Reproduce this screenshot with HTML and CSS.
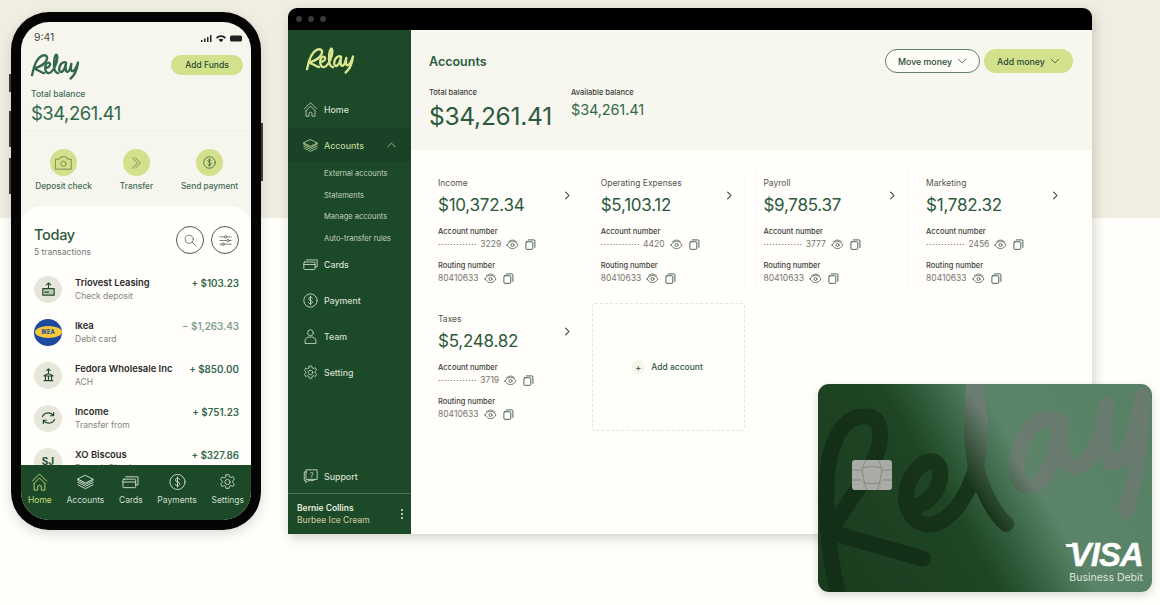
FILE: index.html
```html
<!DOCTYPE html>
<html lang="en">
<head>
<meta charset="utf-8">
<title>Relay</title>
<link rel="stylesheet" href="styles.css">
</head>
<body>
<svg class="defs" width="0" height="0" aria-hidden="true">
  <symbol id="i-eye" viewBox="0 0 14 12"><path d="M1 6.500C3 3.500 5 2.500 7 2.500s4 1 6 4c-2 3-4 4-6 4s-4-1-6-4z"/><path d="M2.500 3.200C4 1.800 5.500 1.200 7 1.200s3 .6 4.500 2"/><circle cx="7" cy="6.500" r="1.700"/></symbol>
  <symbol id="i-copy" viewBox="0 0 12 12"><rect x="1" y="3" width="7.500" height="8.300" rx="1"/><path d="M3.500 1h6.300a1 1 0 0 1 1 1v7.200"/></symbol>
  <symbol id="i-chev" viewBox="0 0 8 12"><path d="M1.500 1.500 6 6l-4.500 4.500"/></symbol>
  <symbol id="i-down" viewBox="0 0 12 8"><path d="M1 1.500 6 6.500l5-5"/></symbol>
  <symbol id="i-home" viewBox="0 0 18 20"><path d="M1 9 9 1l8 8"/><path d="M3 11.500 9 5.500l6 6"/><path d="M3 11.500V19h4v-3.500a2 2 0 0 1 4 0V19h4v-7.500"/></symbol>
  <symbol id="i-layers" viewBox="0 0 18 16"><path d="M9 1 17 5 9 9 1 5z"/><path d="M1 5v1.500l8 4 8-4V5"/><path d="M1 8.500l8 4 8-4"/><path d="M1 11l8 4 8-4"/></symbol>
  <symbol id="i-cards" viewBox="0 0 18 14"><rect x="1" y="4" width="13.500" height="9" rx="1"/><path d="M1 7h13.500"/><path d="M4 1.500h13v8.500h-2.500"/></symbol>
  <symbol id="i-dollar" viewBox="0 0 18 18"><circle cx="9" cy="9" r="8"/><path d="M11.200 6.300C10.800 5.500 10 5 9 5c-1.300 0-2.200.7-2.200 1.900 0 2.500 4.500 1.400 4.500 4 0 1.200-1 2-2.300 2-1.100 0-2-.5-2.400-1.400M9 3.800v10.400"/></symbol>
  <symbol id="i-person" viewBox="0 0 16 18"><circle cx="8" cy="4.500" r="3.500"/><path d="M1.500 17v-2.500c0-3 2-5 6.500-5s6.500 2 6.500 5V17z"/></symbol>
  <symbol id="i-gear" viewBox="0 0 20 20"><circle cx="10" cy="10" r="3"/><path d="M8.200 1.500h3.600l.5 2.500 1.700.8 2.300-1.200 1.800 3.100-1.900 1.600v2.400l1.900 1.600-1.800 3.100-2.300-1.200-1.700.8-.5 2.500H8.200l-.5-2.500-1.700-.8-2.300 1.200-1.800-3.100 1.900-1.600V8.700L1.900 7.100l1.800-3.100L6 5.200l1.700-.8z"/></symbol>
  <symbol id="i-support" viewBox="0 0 18 18"><path d="M4 3.500H1.500v10.500h2v2.500L6 14h7v-1.500"/><path d="M4 1h13v11.500H4z"/><path d="M9 5c0-1 3-1.500 3 .4 0 1.300-1.500 1.200-1.500 2.600M10.500 9.500v.6"/></symbol>
  <symbol id="i-camera" viewBox="0 0 22 18"><path d="M1 4h5l1.500-3h7L16 4h5v13H1z"/><circle cx="11" cy="10" r="3.300"/></symbol>
  <symbol id="i-transfer" viewBox="0 0 14 16"><path d="M1.500 1 8 8l-6.500 7"/><path d="M5.500 1 12 8l-6.500 7"/></symbol>
  <symbol id="i-search" viewBox="0 0 16 16"><circle cx="6.500" cy="6.500" r="5"/><path d="m10 10 5 5"/></symbol>
  <symbol id="i-sliders" viewBox="0 0 16 14"><path d="M1 2.500h5.500M9.500 2.500H15M1 7h8.500M12.500 7H15M1 11.500h2.500M6.500 11.500H15"/><circle cx="8" cy="2.500" r="1.500"/><circle cx="11" cy="7" r="1.500"/><circle cx="5" cy="11.500" r="1.500"/></symbol>
  <symbol id="i-deposit" viewBox="0 0 16 16"><path d="M8 7V1M5.500 3.300 8 1l2.500 2.300"/><path d="M1.500 7.500h13v7.500h-13z" fill="currentColor" fill-opacity=".2"/><path d="M4 11.500h4"/></symbol>
  <symbol id="i-bank" viewBox="0 0 12 16"><path d="M6 6V1M4 2.800 6 1l2 1.800"/><path d="M1 8.500 6 6.500l5 2v.7H1zM2.500 9.500v4M6 9.500v4M9.500 9.500v4M1 14.500h10"/></symbol>
  <symbol id="i-swap" viewBox="0 0 16 14"><path d="M1.500 5.500C3 2.500 5.500 1.500 8 1.500c2.500 0 4 1 5.500 3M13.500 1.200v3.400h-3.300"/><path d="M14.500 8.500C13 11.500 10.500 12.500 8 12.500c-2.500 0-4-1-5.500-3M2.500 12.800V9.400h3.300"/></symbol>
  <symbol id="logo" viewBox="0 0 150 80">
    <path d="M6 66C10 45 20 15 35 8 47 3 54 10 50 20 46 32 26 42 12 46 22 50 34 57 42 60"/>
    <path d="M47 44C54 44 62 38 60 32 58 26 50 28 47 36 44 46 46 60 56 60 64 60 70 50 75 40 80 28 84 10 80 5 75 2 72 20 72 36 72 48 76 58 84 60"/>
    <path d="M108 28C98 24 90 34 88 44 86 54 92 60 98 54 103 49 106 40 108 30 106 42 106 58 113 56 119 54 122 42 124 32 122 44 122 56 128 54 134 52 140 40 144 28 142 44 134 66 122 76"/>
  </symbol>
</svg>

<main class="stage">
  <!-- Phone -->
  <section class="phone">
    <span class="side side-a"></span><span class="side side-b"></span><span class="side side-c"></span><span class="side side-d"></span>
    <div class="screen">
      <div class="status">
        <span>9:41</span>
        <svg class="status-icons" viewBox="0 0 41 8" aria-hidden="true"><path d="M0 6h1.500v2H0zM3 4.500h1.500V8H3zM6 3h1.500v5H6zM9 1h1.500v7H9z"/><path d="M15 3.500c3-3 7-3 10 0l-1.200 1.200c-2.300-2.200-5.300-2.200-7.600 0zM17.500 5.800c1.500-1.400 3.500-1.400 5 0L20 8.200z"/><rect x="29" y="1.500" width="12" height="6" rx="1.500"/></svg>
      </div>
      <div class="brand-row">
        <svg class="logo phone-logo" role="img" aria-label="Relay"><use href="#logo"/></svg>
        <button class="pill-small">Add Funds</button>
      </div>
      <div class="phone-bal">
        <div class="bal-label">Total balance</div>
        <div class="bal-value">$34,261.41</div>
      </div>
      <div class="actions">
        <div class="action"><span class="act-circle"><svg class="ico act-ico"><use href="#i-camera"/></svg></span><span>Deposit check</span></div>
        <div class="action"><span class="act-circle"><svg class="ico act-ico-s"><use href="#i-transfer"/></svg></span><span>Transfer</span></div>
        <div class="action"><span class="act-circle"><svg class="ico act-ico-d"><use href="#i-dollar"/></svg></span><span>Send payment</span></div>
      </div>
      <div class="sheet">
        <div class="sheet-head">
          <div><div class="today">Today</div><div class="tx-count">5 transactions</div></div>
          <div class="round-btns">
            <span class="round"><svg class="ico r-ico"><use href="#i-search"/></svg></span>
            <span class="round"><svg class="ico r-ico"><use href="#i-sliders"/></svg></span>
          </div>
        </div>
        <ul class="txs">
          <li class="tx"><span class="tx-av"><svg class="ico tx-ico"><use href="#i-deposit"/></svg></span><div class="tx-text"><b>Triovest Leasing</b><small>Check deposit</small></div><span class="tx-amt">+ $103.23</span></li>
          <li class="tx"><span class="tx-av ikea"><span class="ikea-oval">IKEA</span></span><div class="tx-text"><b>Ikea</b><small>Debit card</small></div><span class="tx-amt neg">− $1,263.43</span></li>
          <li class="tx"><span class="tx-av"><svg class="ico tx-ico"><use href="#i-bank"/></svg></span><div class="tx-text"><b>Fedora Wholesale Inc</b><small>ACH</small></div><span class="tx-amt">+ $850.00</span></li>
          <li class="tx"><span class="tx-av"><svg class="ico tx-ico"><use href="#i-swap"/></svg></span><div class="tx-text"><b>Income</b><small>Transfer from</small></div><span class="tx-amt">+ $751.23</span></li>
          <li class="tx"><span class="tx-av sj">SJ</span><div class="tx-text"><b>XO Biscous</b><small>Deposit Check</small></div><span class="tx-amt">+ $327.86</span></li>
        </ul>
      </div>
      <nav class="tabbar">
        <div class="tab active"><svg class="ico tab-ico"><use href="#i-home"/></svg><span>Home</span></div>
        <div class="tab"><svg class="ico tab-ico"><use href="#i-layers"/></svg><span>Accounts</span></div>
        <div class="tab"><svg class="ico tab-ico"><use href="#i-cards"/></svg><span>Cards</span></div>
        <div class="tab"><svg class="ico tab-ico"><use href="#i-dollar"/></svg><span>Payments</span></div>
        <div class="tab"><svg class="ico tab-ico"><use href="#i-gear"/></svg><span>Settings</span></div>
      </nav>
    </div>
  </section>

  <!-- Desktop window -->
  <section class="window">
    <div class="titlebar"><i></i><i></i><i></i></div>
    <div class="win-body">
      <aside class="sidebar">
        <svg class="logo side-logo" role="img" aria-label="Relay"><use href="#logo"/></svg>
        <nav class="side-nav">
          <a class="nav"><svg class="ico nav-ico"><use href="#i-home"/></svg>Home</a>
          <a class="nav current"><svg class="ico nav-ico"><use href="#i-layers"/></svg>Accounts<svg class="ico nav-up"><use href="#i-down"/></svg></a>
          <div class="subnav"><a>External accounts</a><a>Statements</a><a>Manage accounts</a><a>Auto-transfer rules</a></div>
          <a class="nav"><svg class="ico nav-ico"><use href="#i-cards"/></svg>Cards</a>
          <a class="nav"><svg class="ico nav-ico"><use href="#i-dollar"/></svg>Payment</a>
          <a class="nav"><svg class="ico nav-ico"><use href="#i-person"/></svg>Team</a>
          <a class="nav"><svg class="ico nav-ico"><use href="#i-gear"/></svg>Setting</a>
        </nav>
        <a class="nav support"><svg class="ico nav-ico"><use href="#i-support"/></svg>Support</a>
        <div class="user">
          <div><div class="user-name">Bernie Collins</div><div class="user-org">Burbee Ice Cream</div></div>
          <span class="kebab"><i></i><i></i><i></i></span>
        </div>
      </aside>
      <div class="content">
        <header class="head">
          <div class="head-top">
            <h1>Accounts</h1>
            <div class="head-btns">
              <button class="pill outline">Move money<svg class="ico pill-ico"><use href="#i-down"/></svg></button>
              <button class="pill solid">Add money<svg class="ico pill-ico"><use href="#i-down"/></svg></button>
            </div>
          </div>
          <div class="balances">
            <div class="bal-main"><div class="small-label">Total balance</div><div class="big-amt">$34,261.41</div></div>
            <div class="bal-avail"><div class="small-label">Available balance</div><div class="mid-amt">$34,261.41</div></div>
          </div>
        </header>
        <div class="grid">
          <article class="acct">
            <div class="acct-name">Income</div>
            <div class="acct-amt">$10,372.34</div>
            <svg class="ico acct-chev"><use href="#i-chev"/></svg>
            <div class="f-label">Account number</div>
            <div class="f-val"><span class="dots">·············</span> 3229<svg class="ico eye"><use href="#i-eye"/></svg><svg class="ico copy"><use href="#i-copy"/></svg></div>
            <div class="f-label">Routing number</div>
            <div class="f-val">80410633<svg class="ico eye"><use href="#i-eye"/></svg><svg class="ico copy"><use href="#i-copy"/></svg></div>
          </article>
          <article class="acct">
            <div class="acct-name">Operating Expenses</div>
            <div class="acct-amt">$5,103.12</div>
            <svg class="ico acct-chev"><use href="#i-chev"/></svg>
            <div class="f-label">Account number</div>
            <div class="f-val"><span class="dots">·············</span> 4420<svg class="ico eye"><use href="#i-eye"/></svg><svg class="ico copy"><use href="#i-copy"/></svg></div>
            <div class="f-label">Routing number</div>
            <div class="f-val">80410633<svg class="ico eye"><use href="#i-eye"/></svg><svg class="ico copy"><use href="#i-copy"/></svg></div>
          </article>
          <article class="acct">
            <div class="acct-name">Payroll</div>
            <div class="acct-amt">$9,785.37</div>
            <svg class="ico acct-chev"><use href="#i-chev"/></svg>
            <div class="f-label">Account number</div>
            <div class="f-val"><span class="dots">·············</span> 3777<svg class="ico eye"><use href="#i-eye"/></svg><svg class="ico copy"><use href="#i-copy"/></svg></div>
            <div class="f-label">Routing number</div>
            <div class="f-val">80410633<svg class="ico eye"><use href="#i-eye"/></svg><svg class="ico copy"><use href="#i-copy"/></svg></div>
          </article>
          <article class="acct">
            <div class="acct-name">Marketing</div>
            <div class="acct-amt">$1,782.32</div>
            <svg class="ico acct-chev"><use href="#i-chev"/></svg>
            <div class="f-label">Account number</div>
            <div class="f-val"><span class="dots">·············</span> 2456<svg class="ico eye"><use href="#i-eye"/></svg><svg class="ico copy"><use href="#i-copy"/></svg></div>
            <div class="f-label">Routing number</div>
            <div class="f-val">80410633<svg class="ico eye"><use href="#i-eye"/></svg><svg class="ico copy"><use href="#i-copy"/></svg></div>
          </article>
          <article class="acct">
            <div class="acct-name">Taxes</div>
            <div class="acct-amt">$5,248.82</div>
            <svg class="ico acct-chev"><use href="#i-chev"/></svg>
            <div class="f-label">Account number</div>
            <div class="f-val"><span class="dots">·············</span> 3719<svg class="ico eye"><use href="#i-eye"/></svg><svg class="ico copy"><use href="#i-copy"/></svg></div>
            <div class="f-label">Routing number</div>
            <div class="f-val">80410633<svg class="ico eye"><use href="#i-eye"/></svg><svg class="ico copy"><use href="#i-copy"/></svg></div>
          </article>
          <article class="add-acct"><span class="plus">+</span>Add account</article>
        </div>
      </div>
    </div>
  </section>

  <!-- Debit card -->
  <section class="debit">
    <svg class="card-word" viewBox="25 25 1002 625" role="img" aria-label="Relay">
      <defs>
        <linearGradient id="wordfill" gradientUnits="userSpaceOnUse" x1="300" y1="500" x2="800" y2="150">
          <stop offset="0" stop-color="#142f17"/>
          <stop offset=".4" stop-color="#183519"/>
          <stop offset=".66" stop-color="#6a7d70"/>
          <stop offset="1" stop-color="#697a6e"/>
        </linearGradient>
      </defs>
      <path d="M85 660C62 560 45 440 50 320 54 220 90 122 165 122 222 122 222 190 190 260 160 325 100 400 60 470L340 550"/>
      <path d="M300 395C360 390 400 330 390 280 378 235 320 260 295 325 270 400 320 460 375 445 425 430 470 370 495 290 515 210 515 110 495 20 480 130 480 260 530 360 550 400 570 430 590 445"/>
      <path d="M735 135C680 115 630 180 622 270 618 340 670 350 705 300 735 260 745 190 755 135 745 220 760 290 810 270 865 245 885 150 892 85 880 180 880 270 920 260 965 240 985 140 1000 60 1000 200 975 320 950 405"/>
    </svg>
    <svg class="chip" viewBox="0 0 40 30" aria-hidden="true"><rect width="40" height="30" rx="3" fill="#aaaba7"/><path d="M0 10h10M0 20h10M30 10h10M30 20h10M14 0c-4 6-4 10-3 15s1 10 4 15M26 0c4 6 4 10 3 15s-1 10-4 15M11 8c5-2 13-2 18 0M11 22c5 2 13 2 18 0" fill="none" stroke="#7f807c" stroke-width=".8"/></svg>
    <div class="visa-block">
      <div class="visa">VISA</div>
      <div class="visa-sub">Business Debit</div>
    </div>
  </section>
</main>
</body>
</html>
```

FILE: styles.css
```css
* { box-sizing: border-box; }
html, body { margin: 0; padding: 0; }
body {
  width: 1160px;
  height: 605px;
  overflow: hidden;
  font-family: Inter, "Liberation Sans", sans-serif;
  color: #1f4a2d;
  background: linear-gradient(#f0eee2 218px, #fffefa 218px);
}
.defs { position: absolute; }
.ico { fill: none; stroke: currentColor; stroke-width: 1; stroke-linecap: round; stroke-linejoin: round; flex: none; }
.stage { position: relative; width: 1160px; height: 605px; overflow: hidden; }
button { font: inherit; border: 0; padding: 0; }
ul { list-style: none; margin: 0; padding: 0; }
.logo { fill: none; stroke: currentColor; stroke-linecap: round; stroke-linejoin: round; stroke-width: 7; display: block; }

/* Phone */
.phone { position: absolute; left: 11px; top: 12px; width: 250px; height: 518px; background: #050505; border-radius: 38px; padding: 10px; box-shadow: 0 4px 12px rgba(40, 40, 20, .16); }
.side { position: absolute; width: 2px; background: #3a3a36; }
.side-a { left: -2px; top: 62px; height: 18px; }
.side-b { left: -2px; top: 99px; height: 36px; }
.side-c { left: -2px; top: 146px; height: 36px; }
.side-d { right: -2px; top: 111px; height: 58px; }
.screen { width: 230px; height: 498px; border-radius: 28px; overflow: hidden; background: #f6f6ef; display: flex; flex-direction: column; }
.status { display: flex; justify-content: space-between; align-items: center; height: 31px; padding: 0 9px 0 13px; font-size: 10.500px; color: #4a4a45; flex: none; }
.status-icons { width: 41px; height: 8px; fill: #222; }
.brand-row { display: flex; justify-content: space-between; align-items: flex-start; padding: 0 8px 0 9px; height: 33px; flex: none; }
.phone-logo { width: 50px; height: 27px; color: #33694a; }
.pill-small { width: 72px; height: 20px; margin-top: 2px; border-radius: 10px; background: #d3e08c; font-size: 8.500px; font-weight: 500; color: #234a2f; }
.phone-bal { padding: 0 10px; height: 45px; flex: none; border-bottom: 1px solid #f0f0e8; }
.bal-label { font-size: 8.500px; font-weight: 500; color: #3f6b52; line-height: 11px; margin-top: 3px; }
.bal-value { font-size: 18.500px; color: #33694a; line-height: 26px; letter-spacing: -.5px; }
.actions { display: grid; grid-template-columns: 1fr 1fr 1fr; padding: 18px 5px 0 6px; height: 75px; flex: none; }
.action { display: flex; flex-direction: column; align-items: center; gap: 5px; font-size: 8.300px; font-weight: 500; color: #3f6b52; line-height: 11px; }
.act-circle { width: 27px; height: 27px; border-radius: 50%; background: #d3e08c; display: grid; place-items: center; color: #5b7a45; }
.act-ico { width: 17px; height: 14px; }
.act-ico-s { width: 11px; height: 12px; }
.act-ico-d { width: 13px; height: 13px; color: #2c5435; }
.sheet { flex: 1; min-height: 0; background: #fffefa; border-radius: 20px 20px 0 0; padding: 0 12px 0 13px; overflow: hidden; }
.sheet-head { display: flex; justify-content: space-between; padding-top: 20px; height: 69px; }
.today { font-size: 14.500px; font-weight: 500; line-height: 18px; color: #2d5a3d; letter-spacing: -.3px; }
.tx-count { font-size: 8.500px; color: #777; line-height: 11px; margin-top: 3px; }
.round-btns { display: flex; gap: 7px; }
.round { width: 28px; height: 28px; border: 1px solid #4a5a50; border-radius: 50%; display: grid; place-items: center; color: #5a6a60; }
.r-ico { width: 13px; height: 13px; }
.txs { display: flex; flex-direction: column; gap: 15px; }
.tx { display: flex; align-items: center; height: 28px; }
.tx-av { width: 28px; height: 27px; border-radius: 50%; background: #e6e6da; display: grid; place-items: center; color: #234a2f; flex: none; }
.tx-ico { width: 15px; height: 14px; stroke-width: 1.300; }
.ikea { background: #1d4a9e; }
.ikea-oval { width: 27px; height: 12px; border-radius: 50%; background: #f5c93a; color: #1d4a9e; font-size: 5.500px; font-weight: 800; line-height: 12px; text-align: center; }
.sj { font-size: 10px; font-weight: 700; }
.tx-text { flex: 1; min-width: 0; padding-left: 13px; display: flex; flex-direction: column; gap: 3px; }
.tx-text b { font-size: 9.400px; font-weight: 600; color: #2b2b28; line-height: 11px; white-space: nowrap; }
.tx-text small { font-size: 8.500px; color: #85857d; line-height: 11px; }
.tx-amt { font-size: 9.800px; font-weight: 600; color: #33694a; align-self: flex-start; line-height: 11px; margin-top: 3px; white-space: nowrap; }
.tx-amt.neg { color: #7fa08c; }
.tabbar { flex: none; height: 55px; background: #1c4a29; display: flex; justify-content: space-between; padding: 8px 7px 0 7px; position: relative; }
.tab { display: flex; flex-direction: column; align-items: center; gap: 4px; font-size: 8.500px; color: #d0dccf; line-height: 11px; }
.tab.active { color: #c5d97c; }
.tab-ico { width: 17px; height: 18px; }

/* Window */
.window { position: absolute; left: 288px; top: 8px; width: 804px; height: 526px; border-radius: 9px 9px 0 0; box-shadow: 2px 4px 12px rgba(50, 50, 30, .22); display: flex; flex-direction: column; overflow: hidden; background: #fffefa; }
.titlebar { flex: none; height: 22px; background: #000; display: flex; align-items: center; gap: 6px; padding-left: 8px; }
.titlebar i { width: 6px; height: 6px; border-radius: 50%; background: #3a3a38; }
.win-body { flex: 1; display: flex; min-height: 0; }
.sidebar { width: 123px; flex: none; background: #1c4a29; color: #d5dfd2; display: flex; flex-direction: column; }
.side-logo { width: 50px; height: 27px; margin: 17px 0 0 17px; color: #dce68f; flex: none; }
.side-nav { margin-top: 18px; flex: 1; display: flex; flex-direction: column; }
.nav { display: flex; align-items: center; height: 34px; padding-left: 15px; font-size: 8.800px; font-weight: 500; gap: 6px; margin-bottom: 2px; flex: none; }
.nav-ico { width: 15px; height: 15px; flex: none; }
.current { background: #1a4226; color: #bed49c; }
.nav-up { width: 9px; height: 6px; margin-left: auto; margin-right: 15px; transform: rotate(180deg); }
.subnav { display: flex; flex-direction: column; padding-left: 36px; font-size: 7.500px; color: #c3d0bf; margin-top: -1px; height: 84px; }
.subnav a { height: 21.500px; line-height: 21.500px; flex: none; }
.support { margin-bottom: 0; margin-top: -1px; }
.user { height: 41px; flex: none; border-top: 1px solid #4d7358; padding: 0 8px 0 9px; display: flex; justify-content: space-between; align-items: center; }
.user-name { font-size: 8.500px; font-weight: 600; color: #e9ecdf; line-height: 12px; }
.user-org { font-size: 8.500px; font-weight: 500; color: #c4bf94; line-height: 12px; }
.kebab { display: flex; flex-direction: column; gap: 2px; }
.kebab i { width: 2px; height: 2px; background: #e9ecdf; border-radius: 50%; }
.content { flex: 1; min-width: 0; display: flex; flex-direction: column; }
.head { height: 120px; flex: none; background: #f7f7f0; padding: 0 19px 0 18px; }
.head-top { display: flex; justify-content: space-between; align-items: center; padding-top: 19px; height: 43px; }
h1 { margin: 0; font-size: 12.500px; font-weight: 600; color: #2d5a3d; }
.head-btns { display: flex; gap: 4px; }
.pill { height: 24px; border-radius: 12px; font-size: 8.800px; font-weight: 500; color: #2a4a35; display: flex; align-items: center; justify-content: center; gap: 5px; }
.pill.outline { width: 95px; border: 1px solid #5f7f6c; background: #fdfdf8; }
.pill.solid { width: 89px; background: #d3e08c; }
.pill-ico { width: 10px; height: 6px; }
.balances { display: flex; margin-top: 15px; }
.bal-main { width: 142px; }
.small-label { font-size: 7.500px; color: #3a3a35; line-height: 10px; font-weight: 500; }
.big-amt { font-size: 24.500px; line-height: 34px; color: #2d5a3d; letter-spacing: -.25px; margin-top: 1px; }
.mid-amt { font-size: 14.500px; line-height: 20px; color: #33694a; margin-top: 2px; letter-spacing: -.13px; }
.grid { display: grid; grid-template-columns: repeat(4, 152.700px); grid-auto-rows: 128px; gap: 8px 10px; padding: 17px 0 0 19px; }
.acct { position: relative; padding: 10px 7px 0; border: 1px solid #fbfaf4; border-radius: 3px; background: #fffefa; }
.acct-name { font-size: 8.500px; color: #55554f; line-height: 10px; }
.acct-amt { font-size: 17px; line-height: 24px; color: #2d5a3d; margin-top: 5px; letter-spacing: -.25px; }
.acct-chev { position: absolute; right: 11px; top: 23px; width: 7px; height: 9px; color: #2a3a30; stroke-width: 1.400; }
.f-label { font-size: 7.500px; color: #3f3f3a; line-height: 10px; margin-top: 10px; font-weight: 500; }
.f-val { display: flex; align-items: center; font-size: 8.500px; color: #777770; line-height: 13px; margin-top: 1px; height: 13px; }
.dots { letter-spacing: .72px; margin-right: 3px; color: #444; font-size: 8px; }
.eye { width: 13px; height: 11px; margin-left: 5px; color: #5d6c62; }
.copy { width: 11px; height: 11px; margin-left: 6px; color: #3a5a45; }
.add-acct { border: 1px dashed #e6e6dc; border-radius: 3px; display: flex; align-items: center; justify-content: center; font-size: 8.500px; font-weight: 500; color: #2d5a3d; gap: 6px; margin-left: -1px; padding-right: 3px; }
.plus { width: 14px; height: 14px; border-radius: 50%; background: #f5f5ec; display: grid; place-items: center; font-size: 9px; line-height: 1; }

/* Card */
.debit { position: absolute; left: 818px; top: 384px; width: 334px; height: 208px; border-radius: 11px; overflow: hidden; background: linear-gradient(60deg, #1a3c1e 0%, #1f4524 40%, #2f5c3a 48%, #5b8468 62%, #568165 100%); box-shadow: 0 3px 9px rgba(40, 40, 20, .18); }
.card-word { position: absolute; inset: 0; width: 334px; height: 208px; fill: none; stroke: url(#wordfill); stroke-width: 48; stroke-linecap: round; stroke-linejoin: round; }
.chip { position: absolute; left: 34px; top: 76px; width: 40px; height: 30px; }
.visa-block { position: absolute; right: 9px; bottom: 8px; text-align: right; color: #fff; }
.visa { position: relative; font-family: "Liberation Sans", Arial, sans-serif; font-size: 33px; font-weight: 700; font-style: italic; line-height: 27px; letter-spacing: -.9px; -webkit-text-stroke: .4px #fff; }
.visa::before { content: ""; position: absolute; left: -3px; top: 3px; width: 10px; height: 3px; background: #fff; transform: skewX(20deg); }
.visa-sub { font-size: 10.500px; line-height: 13px; margin-top: 3px; color: #dbe4dc; }
```
